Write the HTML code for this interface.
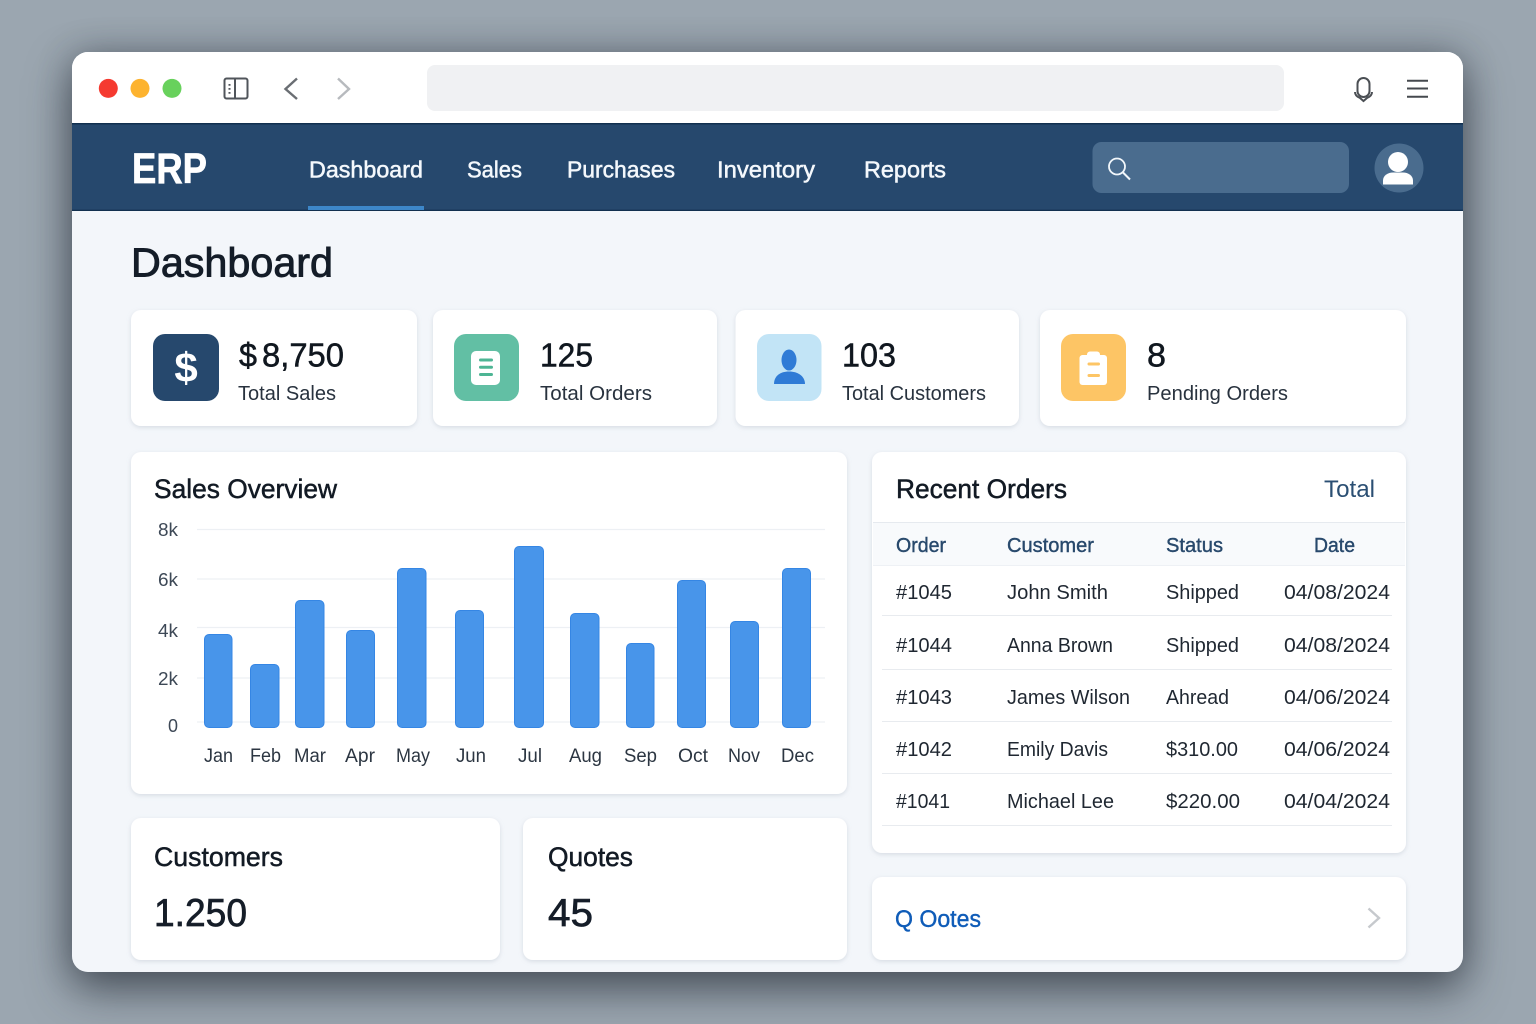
<!DOCTYPE html>
<html lang="en"><head><meta charset="utf-8"><title>ERP Dashboard</title>
<style>
html,body{margin:0;padding:0;width:1536px;height:1024px;overflow:hidden;background:#9ba6b0}
svg{position:absolute;left:0;top:0;display:block}
.w{position:absolute;left:72px;top:52px;width:1391px;height:920px;border-radius:16px;box-shadow:0 18px 44px rgba(35,42,52,.62),0 0 34px rgba(35,42,52,.32)}
text{font-family:"Liberation Sans",sans-serif;white-space:pre}
.m{stroke-width:.5px}
</style></head><body>
<div class="w"></div>
<svg width="1536" height="1024" viewBox="0 0 1536 1024" xmlns="http://www.w3.org/2000/svg">
<defs>
<clipPath id="win"><rect x="72" y="52" width="1391" height="920" rx="16"/></clipPath>
<filter id="cs" x="-5%" y="-10%" width="110%" height="120%"><feDropShadow dx="0" dy="1.5" stdDeviation="2.5" flood-color="#8a97a8" flood-opacity=".28"/></filter>
</defs>
<g clip-path="url(#win)">
<rect x="72" y="52" width="1391" height="920" fill="#f3f6fa"/>
<rect x="72" y="52" width="1391" height="72" fill="#fff"/>
<rect x="72" y="123" width="1391" height="88" fill="#26486d"/>
<rect x="72" y="123" width="1391" height="1.5" fill="#12304f"/>
<rect x="72" y="209.700" width="1391" height="1.300" fill="#12304f"/>
<rect x="308" y="206" width="116" height="4" fill="#3d87c9"/>
</g>
<circle cx="108.300" cy="88.400" r="9.500" fill="#f53a30"/>
<circle cx="140" cy="88.400" r="9.500" fill="#fdb32f"/>
<circle cx="172" cy="88.400" r="9.500" fill="#68d15c"/>
<rect x="224.500" y="78.500" width="23" height="20" rx="2" fill="none" stroke="#50555b" stroke-width="2"/>
<path d="M235 78.500v20" stroke="#50555b" stroke-width="2"/>
<path d="M229.500 84v1.800M229.500 88v1.800M229.500 92v1.800" stroke="#50555b" stroke-width="2"/>
<path d="M297 78.500 285.500 89 297 99" fill="none" stroke="#6a6e73" stroke-width="2.400"/>
<path d="M338 78.500 349 89 338 99" fill="none" stroke="#b7babe" stroke-width="2.400"/>
<rect x="427" y="65" width="857" height="46" rx="8" fill="#f0f1f3"/>
<rect x="1357.500" y="78" width="12" height="19" rx="6" fill="none" stroke="#4b4f54" stroke-width="2"/>
<path d="M1355 92c0 3 2.500 5 5 6l3.500 3 3.500-3c2.500-1 5-3 5-6" fill="none" stroke="#4b4f54" stroke-width="2"/>
<path d="M1407 80.700h21M1407 88.500h21M1407 96.700h21" stroke="#45494e" stroke-width="2"/>

<rect x="1092.500" y="142" width="256.500" height="51" rx="9" fill="#4a6c8e"/>
<circle cx="1117" cy="166.500" r="8" fill="none" stroke="#f2f7fb" stroke-width="1.800"/>
<path d="M1123 172.500l7 7" stroke="#f2f7fb" stroke-width="2"/>
<circle cx="1399" cy="168" r="24.500" fill="#4a6c8e"/>
<circle cx="1398" cy="162" r="10" fill="#fff"/>
<path d="M1383 184.500v-4c0-5 5-8 10-8h10c5 0 10 3 10 8v4z" fill="#fff"/>

<text x="132" y="183" font-size="43" font-weight="700" fill="#fff" stroke="#fff" stroke-width=".7" textLength="75" lengthAdjust="spacingAndGlyphs">ERP</text>
<g font-size="23" fill="#f4f8fc" stroke="#f4f8fc" class="m">
<text x="309" y="177.500" textLength="114" lengthAdjust="spacingAndGlyphs">Dashboard</text>
<text x="467" y="177.500" textLength="55" lengthAdjust="spacingAndGlyphs">Sales</text>
<text x="567" y="177.500" textLength="108" lengthAdjust="spacingAndGlyphs">Purchases</text>
<text x="717" y="177.500" textLength="98" lengthAdjust="spacingAndGlyphs">Inventory</text>
<text x="864" y="177.500" textLength="82" lengthAdjust="spacingAndGlyphs">Reports</text>
</g>
<text x="131" y="276.500" font-size="41" fill="#141d28" stroke="#141d28" stroke-width=".9" textLength="202" lengthAdjust="spacingAndGlyphs">Dashboard</text>

<g fill="#fff" filter="url(#cs)">
<rect x="131" y="310" width="286" height="116" rx="10"/>
<rect x="433" y="310" width="284" height="116" rx="10"/>
<rect x="735.500" y="310" width="283.500" height="116" rx="10"/>
<rect x="1040" y="310" width="366" height="116" rx="10"/>
<rect x="131" y="452" width="716" height="342" rx="10"/>
<rect x="872" y="452" width="534" height="401" rx="10"/>
<rect x="131" y="818" width="369" height="142" rx="10"/>
<rect x="523" y="818" width="324" height="142" rx="10"/>
<rect x="872" y="877" width="534" height="83" rx="10"/>
</g>

<rect x="153" y="334" width="66" height="67" rx="12" fill="#26486d"/>
<text x="186" y="382" font-size="42" font-weight="700" fill="#fff" text-anchor="middle">$</text>
<rect x="454" y="334" width="65" height="67" rx="12" fill="#62bfa4"/>
<rect x="471" y="351" width="29" height="34" rx="5" fill="#fff"/>
<path d="M480.500 360h11M480.500 367.300h11M480.500 374.500h11" stroke="#4db594" stroke-width="3" stroke-linecap="round"/>
<rect x="757" y="334" width="64.500" height="67" rx="12" fill="#c2e4f6"/>
<ellipse cx="789" cy="360" rx="7.500" ry="10.500" fill="#2f7bd6"/>
<path d="M774 384c0-7 5-12.500 15-12.500s16 5.500 16 12.500z" fill="#2f7bd6"/>
<rect x="1061" y="334" width="65" height="67" rx="12" fill="#fdc565"/>
<rect x="1079.500" y="355" width="27.500" height="30" rx="3" fill="#fff"/>
<rect x="1087" y="351.500" width="13" height="7" rx="3" fill="#fff"/>
<path d="M1089 364h9.500M1089 375.500h9.500" stroke="#fdc565" stroke-width="3" stroke-linecap="round"/>

<g font-size="33" fill="#10171f" stroke="#10171f" class="m">
<text x="239" y="366.500" textLength="18" lengthAdjust="spacingAndGlyphs">$</text>
<text x="262" y="366.500" textLength="82" lengthAdjust="spacingAndGlyphs">8,750</text>
<text x="540" y="366.500" textLength="53" lengthAdjust="spacingAndGlyphs">125</text>
<text x="842" y="366.500" textLength="54" lengthAdjust="spacingAndGlyphs">103</text>
<text x="1147" y="366.500" textLength="19" lengthAdjust="spacingAndGlyphs">8</text>
</g>
<g font-size="20.500" fill="#28323e">
<text x="238" y="400" textLength="98" lengthAdjust="spacingAndGlyphs">Total Sales</text>
<text x="540" y="400" textLength="112" lengthAdjust="spacingAndGlyphs">Total Orders</text>
<text x="842" y="400" textLength="144" lengthAdjust="spacingAndGlyphs">Total Customers</text>
<text x="1147" y="400" textLength="141" lengthAdjust="spacingAndGlyphs">Pending Orders</text>
</g>

<g font-size="27" fill="#121a24" stroke="#121a24" class="m">
<text x="154" y="498" textLength="183" lengthAdjust="spacingAndGlyphs">Sales Overview</text>
<text x="896" y="498" textLength="171" lengthAdjust="spacingAndGlyphs">Recent Orders</text>
<text x="154" y="866" textLength="129" lengthAdjust="spacingAndGlyphs">Customers</text>
<text x="548" y="866" textLength="85" lengthAdjust="spacingAndGlyphs">Quotes</text>
</g>
<text x="1324" y="497" font-size="24" fill="#2b4f73" textLength="51" lengthAdjust="spacingAndGlyphs">Total</text>

<path d="M197 529.500h628M197 579h628M197 627.500h628M197 678h628M197 722h628" stroke="#edf0f4" stroke-width="1.300"/>
<g font-size="18" fill="#3d4856">
<text x="158" y="536" textLength="20" lengthAdjust="spacingAndGlyphs">8k</text>
<text x="158" y="586" textLength="20" lengthAdjust="spacingAndGlyphs">6k</text>
<text x="158" y="637" textLength="20" lengthAdjust="spacingAndGlyphs">4k</text>
<text x="158" y="685" textLength="20" lengthAdjust="spacingAndGlyphs">2k</text>
<text x="168" y="732" textLength="10" lengthAdjust="spacingAndGlyphs">0</text>
</g>
<g fill="#4895ea" stroke="#3586e4" stroke-width="1">
<rect x="204.500" y="634.500" width="27.500" height="93" rx="4.500"/>
<rect x="250.500" y="664.500" width="28.500" height="63" rx="4.500"/>
<rect x="295.500" y="600.500" width="28.500" height="127" rx="4.500"/>
<rect x="346.500" y="630.500" width="28" height="97" rx="4.500"/>
<rect x="397.500" y="568.500" width="28.500" height="159" rx="4.500"/>
<rect x="455.500" y="610.500" width="28" height="117" rx="4.500"/>
<rect x="514.500" y="546.500" width="29" height="181" rx="4.500"/>
<rect x="570.500" y="613.500" width="28.500" height="114" rx="4.500"/>
<rect x="626.500" y="643.500" width="27.500" height="84" rx="4.500"/>
<rect x="677.500" y="580.500" width="28" height="147" rx="4.500"/>
<rect x="730.500" y="621.500" width="28" height="106" rx="4.500"/>
<rect x="782.500" y="568.500" width="28" height="159" rx="4.500"/>
</g>
<g font-size="19" fill="#2c3642">
<text x="204" y="762" textLength="29" lengthAdjust="spacingAndGlyphs">Jan</text>
<text x="250" y="762" textLength="31" lengthAdjust="spacingAndGlyphs">Feb</text>
<text x="294" y="762" textLength="32" lengthAdjust="spacingAndGlyphs">Mar</text>
<text x="345" y="762" textLength="30" lengthAdjust="spacingAndGlyphs">Apr</text>
<text x="396" y="762" textLength="34" lengthAdjust="spacingAndGlyphs">May</text>
<text x="456" y="762" textLength="30" lengthAdjust="spacingAndGlyphs">Jun</text>
<text x="518" y="762" textLength="24" lengthAdjust="spacingAndGlyphs">Jul</text>
<text x="569" y="762" textLength="33" lengthAdjust="spacingAndGlyphs">Aug</text>
<text x="624" y="762" textLength="33" lengthAdjust="spacingAndGlyphs">Sep</text>
<text x="678" y="762" textLength="30" lengthAdjust="spacingAndGlyphs">Oct</text>
<text x="728" y="762" textLength="32" lengthAdjust="spacingAndGlyphs">Nov</text>
<text x="781" y="762" textLength="33" lengthAdjust="spacingAndGlyphs">Dec</text>
</g>

<rect x="873" y="523" width="532" height="42" fill="#f8fafc"/>
<path d="M873 522.500h532" stroke="#e6eaef" stroke-width="1"/>
<path d="M873 565.500h532" stroke="#eef1f5" stroke-width="1"/>
<path d="M882 615.500h510M882 669.500h510M882 721.500h510M882 773.500h510M882 825.500h510" stroke="#e8ebef" stroke-width="1"/>
<g font-size="20" fill="#28496c" stroke="#28496c" stroke-width=".4">
<text x="896" y="552" textLength="50" lengthAdjust="spacingAndGlyphs">Order</text>
<text x="1007" y="552" textLength="87" lengthAdjust="spacingAndGlyphs">Customer</text>
<text x="1166" y="552" textLength="57" lengthAdjust="spacingAndGlyphs">Status</text>
<text x="1314" y="552" textLength="41" lengthAdjust="spacingAndGlyphs">Date</text>
</g>
<g font-size="20.500" fill="#1f2731">
<text x="896" y="599" textLength="56" lengthAdjust="spacingAndGlyphs">#1045</text>
<text x="1007" y="599" textLength="101" lengthAdjust="spacingAndGlyphs">John Smith</text>
<text x="1166" y="599" textLength="73" lengthAdjust="spacingAndGlyphs">Shipped</text>
<text x="1284" y="599" textLength="106" lengthAdjust="spacingAndGlyphs">04/08/2024</text>
<text x="896" y="652" textLength="56" lengthAdjust="spacingAndGlyphs">#1044</text>
<text x="1007" y="652" textLength="106" lengthAdjust="spacingAndGlyphs">Anna Brown</text>
<text x="1166" y="652" textLength="73" lengthAdjust="spacingAndGlyphs">Shipped</text>
<text x="1284" y="652" textLength="106" lengthAdjust="spacingAndGlyphs">04/08/2024</text>
<text x="896" y="704" textLength="56" lengthAdjust="spacingAndGlyphs">#1043</text>
<text x="1007" y="704" textLength="123" lengthAdjust="spacingAndGlyphs">James Wilson</text>
<text x="1166" y="704" textLength="63" lengthAdjust="spacingAndGlyphs">Ahread</text>
<text x="1284" y="704" textLength="106" lengthAdjust="spacingAndGlyphs">04/06/2024</text>
<text x="896" y="756" textLength="56" lengthAdjust="spacingAndGlyphs">#1042</text>
<text x="1007" y="756" textLength="101" lengthAdjust="spacingAndGlyphs">Emily Davis</text>
<text x="1166" y="756" textLength="72" lengthAdjust="spacingAndGlyphs">$310.00</text>
<text x="1284" y="756" textLength="106" lengthAdjust="spacingAndGlyphs">04/06/2024</text>
<text x="896" y="808" textLength="54" lengthAdjust="spacingAndGlyphs">#1041</text>
<text x="1007" y="808" textLength="107" lengthAdjust="spacingAndGlyphs">Michael Lee</text>
<text x="1166" y="808" textLength="74" lengthAdjust="spacingAndGlyphs">$220.00</text>
<text x="1284" y="808" textLength="106" lengthAdjust="spacingAndGlyphs">04/04/2024</text>
</g>

<g font-size="39" fill="#151d28" stroke="#151d28" stroke-width=".7">
<text x="154" y="926" textLength="93" lengthAdjust="spacingAndGlyphs">1.250</text>
<text x="548" y="926" textLength="45" lengthAdjust="spacingAndGlyphs">45</text>
</g>
<text x="895" y="927" font-size="24" fill="#0f5cb8" stroke="#0f5cb8" stroke-width=".4" textLength="86" lengthAdjust="spacingAndGlyphs">Q Ootes</text>
<path d="M1368.500 908.500 1379 918 1368.500 927.500" fill="none" stroke="#c6c9cd" stroke-width="2.400"/>
</svg>
</body></html>
